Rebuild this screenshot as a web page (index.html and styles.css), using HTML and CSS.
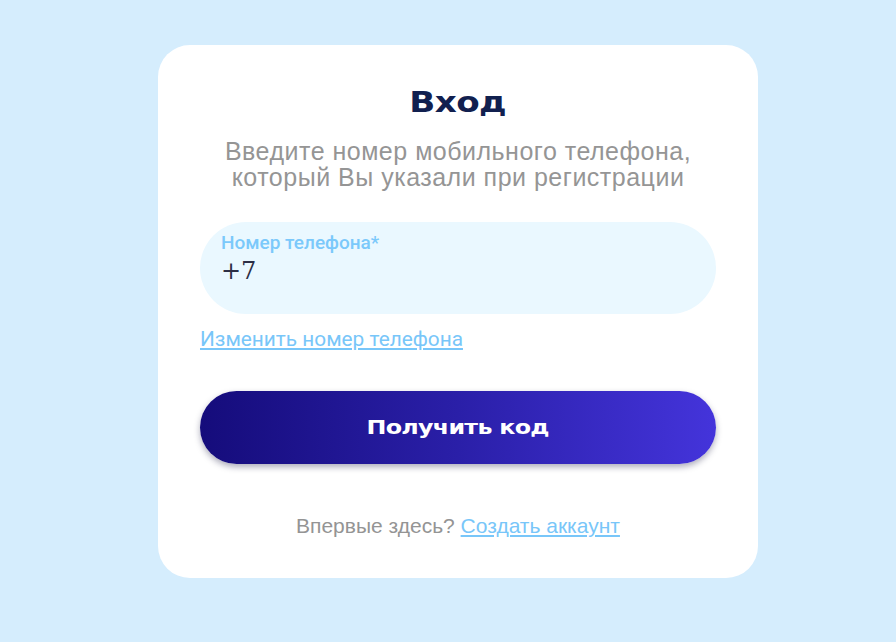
FILE: index.html
```html
<!DOCTYPE html>
<html lang="ru">
<head>
<meta charset="utf-8">
<title>Вход</title>
<link rel="stylesheet" href="styles.css">
</head>
<body>
<main class="page">
  <section class="card">
    <h1 class="title"><span class="wide">Вход</span></h1>
    <p class="subtitle">Введите номер мобильного телефона,<br>который Вы указали при регистрации</p>
    <label class="field">
      <span class="field-label">Номер телефона*</span>
      <span class="field-value">+7</span>
    </label>
    <a class="change-link" href="#">Изменить номер телефона</a>
    <button class="submit" type="button"><span class="wide">Получить код</span></button>
    <p class="footer">Впервые здесь? <a class="footer-link" href="#">Создать аккаунт</a></p>
  </section>
</main>
</body>
</html>
```
FILE: styles.css
```css
html, body {
  margin: 0;
  padding: 0;
  height: 100%;
}
body {
  background: #d5edfd;
  font-family: "Liberation Sans", Arial, sans-serif;
}
.page {
  display: flex;
  justify-content: center;
  padding-top: 45px;
  padding-left: 20px;
}
.card {
  width: 600px;
  box-sizing: border-box;
  height: 533px;
  background: #ffffff;
  border-radius: 32px;
  padding: 40px 42px 0;
  display: flex;
  flex-direction: column;
}
.title {
  margin: 0;
  text-align: center;
  font-family: "DejaVu Sans", sans-serif;
  font-weight: bold;
  font-size: 28px;
  line-height: 36px;
  color: #11204f;
  letter-spacing: -0.5px;
}
.wide {
  display: inline-block;
  transform: scaleX(1.22);
}
.subtitle {
  margin: 17px 0 0;
  text-align: center;
  color: #959595;
  font-size: 25px;
  letter-spacing: 0.5px;
  line-height: 26px;
}
.field {
  margin-top: 32px;
  height: 92px;
  box-sizing: border-box;
  border-radius: 46px;
  background: #eaf8ff;
  padding: 11px 21px 0;
  display: flex;
  flex-direction: column;
}
.field-label {
  font-family: Roboto, sans-serif;
  font-weight: 500;
  font-size: 19px;
  line-height: 20px;
  color: #7bc9fb;
}
.field-value {
  margin-top: 2px;
  font-family: "DejaVu Serif", serif;
  font-size: 24px;
  line-height: 32px;
  color: #2c2e45;
}
.change-link {
  margin-top: 13px;
  align-self: flex-start;
  font-family: Roboto, sans-serif;
  font-size: 20.8px;
  line-height: 24px;
  color: #78c6f9;
  text-decoration: underline;
  text-underline-offset: 2px;
}
.submit {
  margin-top: 40px;
  height: 73px;
  border: 0;
  border-radius: 37px;
  background: linear-gradient(90deg, #150c7b 0%, #2a1fa8 50%, #4434db 100%);
  box-shadow: 0 3px 6px rgba(20, 20, 60, 0.35);
  color: #ffffff;
  font-family: "DejaVu Sans", sans-serif;
  font-weight: bold;
  font-size: 19.5px;
  letter-spacing: -0.6px;
  cursor: pointer;
}
.footer {
  margin: 50px 0 0;
  text-align: center;
  color: #949494;
  font-size: 21px;
  line-height: 24px;
}
.footer-link {
  color: #78c6f9;
  text-decoration: underline;
  text-underline-offset: 2px;
}
```
